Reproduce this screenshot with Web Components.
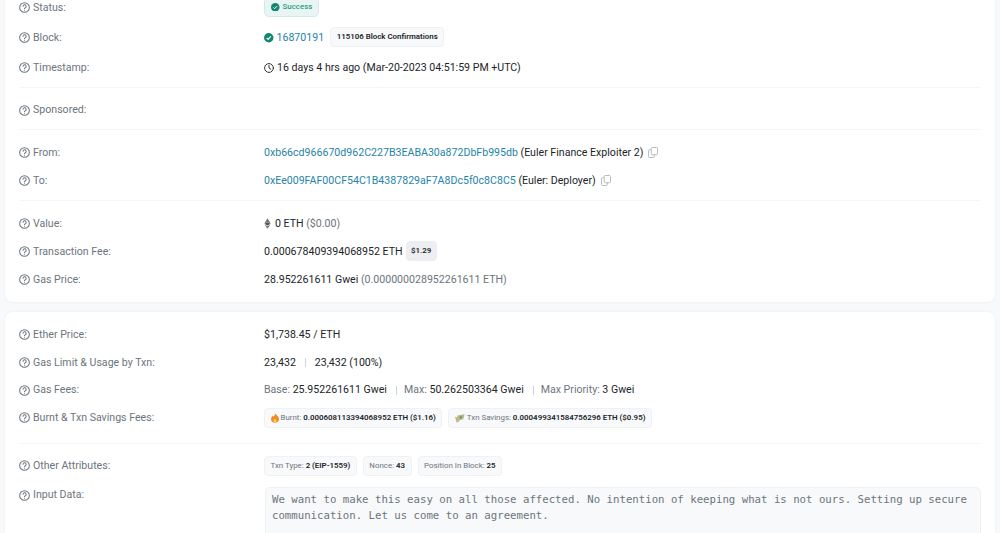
<!DOCTYPE html>
<html lang="en">
<head>
<meta charset="UTF-8">
<title>Transaction details</title>
<style>
    html, body { margin: 0; height: 533px; overflow: hidden; background: #f8f9fb; }
    body { font: 10.6px/1.4 Roboto, "Liberation Sans", sans-serif; color: #212529; }
</style>
</head>
<body>
<tx-page>
    <tx-card style="--top: -16px">
        <tx-row label="Status:" h="30"><tx-status>Success</tx-status></tx-row>
        <tx-row label="Block:" h="30"><tx-check></tx-check><tx-link>16870191</tx-link><tx-pill gap="6">115106 Block Confirmations</tx-pill></tx-row>
        <tx-row label="Timestamp:" h="30"><tx-clock></tx-clock>16 days 4 hrs ago (Mar-20-2023 04:51:59 PM +UTC)</tx-row>
        <tx-rule t="5"></tx-rule>
        <tx-row label="Sponsored:" h="27"></tx-row>
        <tx-rule></tx-rule>
        <tx-row label="From:" h="28"><tx-link>0xb66cd966670d962C227B3EABA30a872DbFb995db</tx-link>&nbsp;(Euler Finance Exploiter 2)<tx-copy></tx-copy></tx-row>
        <tx-row label="To:" h="28"><tx-link>0xEe009FAF00CF54C1B4387829aF7A8Dc5f0c8C8C5</tx-link>&nbsp;(Euler: Deployer)<tx-copy></tx-copy></tx-row>
        <tx-rule></tx-rule>
        <tx-row label="Value:" h="28"><tx-eth></tx-eth>0 ETH&nbsp;<tx-muted>($0.00)</tx-muted></tx-row>
        <tx-row label="Transaction Fee:" h="28">0.000678409394068952 ETH<tx-pill gap="3" flat>$1.29</tx-pill></tx-row>
        <tx-row label="Gas Price:" h="28">28.952261611 Gwei&nbsp;<tx-muted>(0.000000028952261611 ETH)</tx-muted></tx-row>
    </tx-card>
    <tx-card style="--top: 10px">
        <tx-row label="Ether Price:" h="28">$1,738.45 / ETH</tx-row>
        <tx-row label="Gas Limit &amp; Usage by Txn:" h="28">23,432<tx-sep></tx-sep>23,432 (100%)</tx-row>
        <tx-row label="Gas Fees:" h="27"><tx-muted>Base:&nbsp;</tx-muted>25.952261611 Gwei<tx-sep tight></tx-sep><tx-muted>Max:&nbsp;</tx-muted>50.262503364 Gwei<tx-sep tight></tx-sep><tx-muted>Max Priority:&nbsp;</tx-muted>3 Gwei</tx-row>
        <tx-row label="Burnt &amp; Txn Savings Fees:" h="30" style="--lift: 2px">
            <tx-pill><tx-flame></tx-flame><tx-muted>Burnt:&nbsp;</tx-muted>0.000608113394068952 ETH ($1.16)</tx-pill>
            <tx-pill gap="6"><tx-money></tx-money><tx-muted>Txn Savings:&nbsp;</tx-muted>0.000499341584756296 ETH ($0.95)</tx-pill>
        </tx-row>
        <tx-rule t="10"></tx-rule>
        <tx-row label="Other Attributes:" h="28" style="--lift: 2px">
            <tx-pill><tx-muted>Txn Type:&nbsp;</tx-muted>2 (EIP-1559)</tx-pill>
            <tx-pill gap="6"><tx-muted>Nonce:&nbsp;</tx-muted>43</tx-pill>
            <tx-pill gap="6"><tx-muted>Position In Block:&nbsp;</tx-muted>25</tx-pill>
        </tx-row>
        <tx-row label="Input Data:" h="100" top><tx-input>We want to make this easy on all those affected. No intention of keeping what is not ours. Setting up secure communication. Let us come to an agreement.</tx-input></tx-row>
    </tx-card>
</tx-page>
<script>
    // small helper, every element is just a template + open shadow root
    function component(name, html, setup) {
        const tpl = document.createElement('template');
        tpl.innerHTML = html;
        customElements.define(name, class extends HTMLElement {
            constructor() {
                super();
                this.attachShadow({ mode: 'open' }).append(tpl.content.cloneNode(true));
            }
            connectedCallback() {
                if (setup) setup(this, this.shadowRoot);
            }
        });
    }

    component('tx-page', `<style>:host { display: flex; flex-direction: column; padding: 0 5px; }</style><slot></slot>`);

    component('tx-card', `<style>
        :host { display: block; margin-top: var(--top, 0); padding: 8px 14px 9px; background: #fff; border-radius: 8px; box-shadow: 0 0 3px rgba(189,197,209,.2); }
    </style><slot></slot>`);

    component('tx-rule', `<style>:host { display: block; height: 1px; margin: var(--t, 6px) 0 8px; background: #f4f5f7; }</style>`, el => {
        if (el.hasAttribute('t')) el.style.setProperty('--t', el.getAttribute('t') + 'px');
    });

    component('tx-row', `<style>
        :host { display: grid; box-sizing: border-box; grid-template-columns: 245px 1fr; align-items: center; height: var(--h, 28px); padding-top: 2px; }
        :host([top]) { align-items: start; }
        .label { display: flex; align-items: center; gap: 3px; margin-bottom: var(--lift, 0); color: #6c757d; white-space: nowrap; }
        :host([top]) .label { margin-top: 6px; }
        .value { display: flex; align-items: center; white-space: nowrap; min-width: 0; }
        svg { width: 11px; height: 11px; fill: none; stroke: #6c757d; stroke-width: 1.1; stroke-linecap: round; }
    </style>
    <div class="label">
        <svg viewBox="0 0 12 12"><circle cx="6" cy="6" r="5.3"/><path d="M4.4 4.7a1.7 1.7 0 1 1 2.5 1.5c-.6.3-.9.6-.9 1.1"/><path d="M6 9v.1"/></svg>
        <span id="text"></span>
    </div>
    <div class="value"><slot></slot></div>`, (el, root) => {
        root.getElementById('text').textContent = el.getAttribute('label');
        el.style.setProperty('--h', el.getAttribute('h') + 'px');
    });

    component('tx-link', `<style>:host { color: #1f84a8; }</style><slot></slot>`);
    component('tx-muted', `<style>:host { color: #6c757d; font-weight: 400; }</style><slot></slot>`);
    component('tx-sep', `<style>
        :host { display: inline-block; width: 1px; height: 9px; margin: 0 9px; background: #ced4da; }
        :host([tight]) { margin-right: 7px; }
    </style>`);

    component('tx-pill', `<style>
        :host { display: inline-flex; align-items: center; height: 18px; padding: 0 5.5px; margin: -2px 0 0 var(--gap, 0); background: #f8f9fa; border: 1px solid #eff1f4; border-radius: 4px; font-size: 7.9px; font-weight: 600; color: #212529; }
        :host([flat]) { padding: 0 4.5px; background: #eceef1; border-color: #eceef1; }
    </style><slot></slot>`, el => {
        el.style.setProperty('--gap', (el.getAttribute('gap') || 0) + 'px');
    });

    component('tx-status', `<style>
        :host { display: inline-flex; align-items: center; gap: 3px; height: 20px; box-sizing: border-box; margin-top: -2px; padding: 0 6px; background: #e9f5f3; border: 1px solid #d3ebe6; border-radius: 5px; font-size: 7.9px; font-weight: 500; color: #2a9d87; }
        svg { width: 8.5px; height: 8.5px; }
    </style>
    <svg viewBox="0 0 12 12"><circle cx="6" cy="6" r="6" fill="#14866f"/><path d="M3.4 6.2l1.8 1.8 3.4-3.6" fill="none" stroke="#fff" stroke-width="1.4"/></svg>
    <slot></slot>`);

    component('tx-check', `<style>
        :host { display: inline-flex; margin-right: 3px; }
        svg { width: 9.5px; height: 9.5px; }
    </style><svg viewBox="0 0 12 12"><circle cx="6" cy="6" r="6" fill="#14866f"/><path d="M3.4 6.2l1.8 1.8 3.4-3.6" fill="none" stroke="#fff" stroke-width="1.4"/></svg>`);

    component('tx-clock', `<style>
        :host { display: inline-flex; margin-right: 3px; }
        svg { width: 10px; height: 10px; fill: none; stroke: #212529; stroke-width: 1.1; stroke-linecap: round; }
    </style><svg viewBox="0 0 12 12"><circle cx="6" cy="6" r="5.3"/><path d="M6 2.8V6l2.2 1.4"/></svg>`);

    component('tx-copy', `<style>
        :host { display: inline-flex; margin-left: 5px; }
        svg { width: 10px; height: 11px; fill: none; stroke: #adb5bd; stroke-width: 1; }
    </style><svg viewBox="0 0 11 12"><rect x="3.5" y=".5" width="7" height="8" rx="1.2"/><path d="M3.5 3H1.7C1 3 .5 3.5.5 4.2v6.1c0 .7.5 1.2 1.2 1.2h4.1c.7 0 1.2-.5 1.2-1.2V8.5"/></svg>`);

    component('tx-eth', `<style>
        :host { display: inline-flex; margin: 0 4px 0 0; }
        svg { width: 7px; height: 11px; }
    </style><svg viewBox="0 0 8 12"><path d="M4 0L.4 6.1 4 4.5 7.6 6.1z" fill="#6c757d"/><path d="M.4 6.3L4 8.4l3.6-2.1L4 4.9z" fill="#495057"/><path d="M.6 7.2L4 12l3.4-4.8L4 9.2z" fill="#6c757d"/></svg>`);

    component('tx-flame', `<style>
        :host { display: inline-flex; margin-right: 2px; }
        svg { width: 8px; height: 10px; }
    </style><svg viewBox="0 0 10 12"><path d="M5.2 0c.5 2-1 3-2.2 4.5C2.6 3.9 2.5 3.5 2.4 3 1 4.4 0 5.9 0 7.5 0 10 2.2 12 5 12s5-2 5-4.5C10 4 7 2.5 5.2 0z" fill="#f08a2c"/><path d="M5 6.5c-.8 1-1.8 1.700-1.8 3.100C3.200 10.800 4 11.500 5 11.500s1.800-.7 1.800-1.900C6.800 8.400 5.800 7.600 5 6.500z" fill="#f9cd54"/></svg>`);

    component('tx-money', `<style>
        :host { display: inline-flex; margin-right: 2px; }
        svg { width: 10px; height: 9px; }
    </style><svg viewBox="0 0 12 10"><path d="M3 1.5L11.5 0 10 6 2 8z" fill="#a9bd8b"/><path d="M0 3l4 1 1.5 4-3.5 2z" fill="#c9b48a"/><circle cx="7" cy="3.5" r="1.3" fill="#71875a"/></svg>`);

    component('tx-input', `<style>
        :host { display: block; box-sizing: border-box; width: 716px; height: 90px; margin: 5px 0 0 1px; padding: 4px 6px; background: #f8f9fa; border: 1px solid #eef0f3; border-radius: 5px; font: 10.7px/16px "DejaVu Sans Mono", monospace; color: #6c757d; white-space: normal; }
    </style><slot></slot>`);
</script>
</body>
</html>
